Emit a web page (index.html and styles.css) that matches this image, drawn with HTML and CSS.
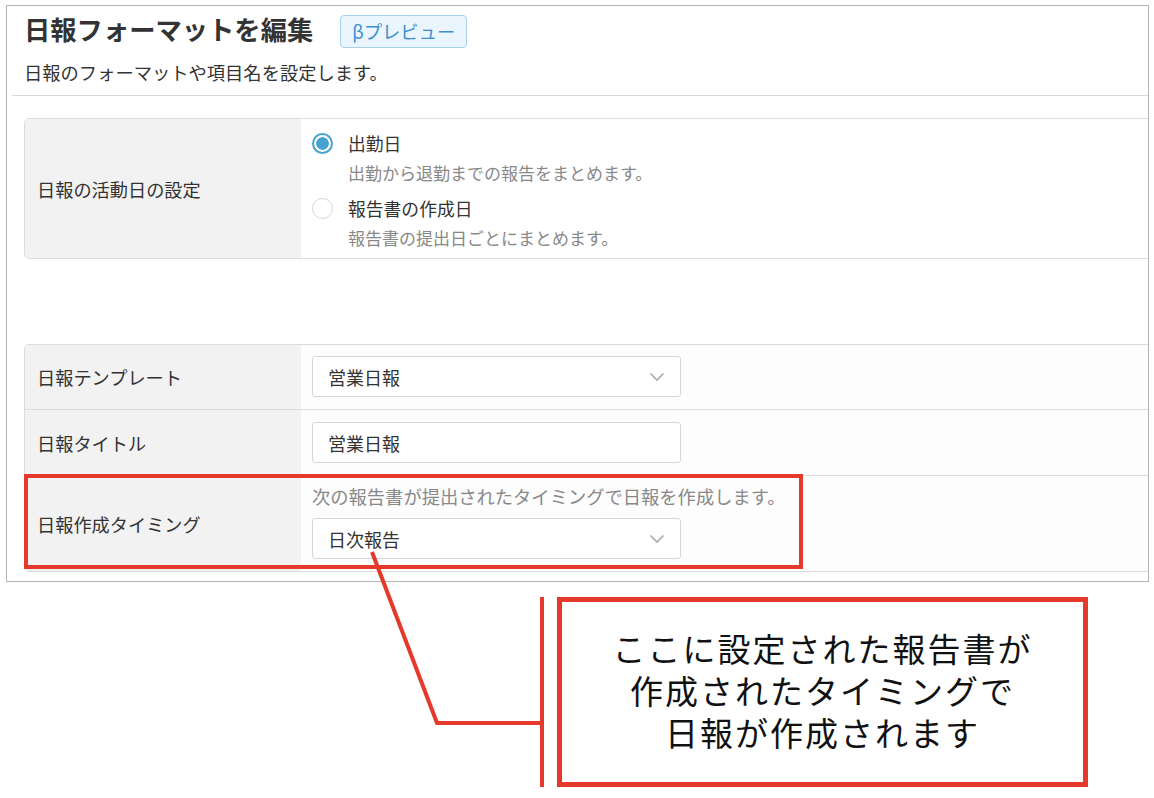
FILE: index.html
```html
<!DOCTYPE html>
<html lang="ja">
<head>
    <meta charset="UTF-8">
    <meta name="viewport" content="width=device-width, initial-scale=1.0">
    <title>日報フォーマットを編集</title>
    <link rel="stylesheet" href="styles.css">
</head>
<body>
    <div class="page">
        <div class="panel">
            <div class="head">
                <div class="title-row">
                    <h1>日報フォーマットを編集</h1>
                    <span class="badge">βプレビュー</span>
                </div>
                <p class="lead">日報のフォーマットや項目名を設定します。</p>
            </div>
            <div class="divider"></div>

            <!-- 活動日 -->
            <div class="form-table first">
                <div class="row">
                    <div class="label">日報の活動日の設定</div>
                    <div class="value options">
                        <label class="option">
                            <span class="radio checked"></span>
                            <span class="option-text">
                                <span class="option-title">出勤日</span>
                                <span class="hint">出勤から退勤までの報告をまとめます。</span>
                            </span>
                        </label>
                        <label class="option">
                            <span class="radio"></span>
                            <span class="option-text">
                                <span class="option-title">報告書の作成日</span>
                                <span class="hint">報告書の提出日ごとにまとめます。</span>
                            </span>
                        </label>
                    </div>
                </div>
            </div>

            <!-- テンプレート -->
            <div class="form-table second">
                <div class="row r1">
                    <div class="label">日報テンプレート</div>
                    <div class="value">
                        <div class="select">営業日報
                            <svg class="chev" width="16" height="10" viewBox="0 0 16 10"><path d="M1.5 1.5 L8 8 L14.5 1.5" fill="none" stroke="#aaa" stroke-width="1.6"/></svg>
                        </div>
                    </div>
                </div>
                <div class="row r2">
                    <div class="label">日報タイトル</div>
                    <div class="value">
                        <div class="select">営業日報</div>
                    </div>
                </div>
                <div class="row r3">
                    <div class="label">日報作成タイミング</div>
                    <div class="value stack">
                        <span class="hint wide">次の報告書が提出されたタイミングで日報を作成します。</span>
                        <div class="select">日次報告
                            <svg class="chev" width="16" height="10" viewBox="0 0 16 10"><path d="M1.5 1.5 L8 8 L14.5 1.5" fill="none" stroke="#aaa" stroke-width="1.6"/></svg>
                        </div>
                    </div>
                </div>
            </div>
        </div>

        <!-- 注釈 -->
        <div class="mark"></div>
        <svg class="lines" width="1154" height="798" viewBox="0 0 1154 798">
            <polyline points="372,552 437,723 541,723" fill="none" stroke="#e5392b" stroke-width="4"/>
            <line x1="542" y1="597" x2="542" y2="787" stroke="#e5392b" stroke-width="4"/>
        </svg>
        <div class="callout">
            <p>ここに設定された報告書が<br>作成されたタイミングで<br>日報が作成されます</p>
        </div>
    </div>
</body>
</html>
```

FILE: styles.css
```css
body {
    margin: 0;
    font-family: "Noto Sans CJK JP", "Noto Sans", sans-serif;
    color: #333;
    background: #fff;
}

.page {
    position: relative;
    width: 1154px;
    height: 798px;
    overflow: hidden;
}

.panel {
    box-sizing: border-box;
    margin: 5px 0 0 6px;
    width: 1143px;
    height: 577px;
    border: 1px solid #b4b4b4;
    overflow: hidden;
    background: #fff;
}

.head {
    padding: 8px 0 0 17px;
}

.title-row {
    display: flex;
    align-items: center;
    gap: 27px;
    height: 34px;
}

h1 {
    margin: 0;
    font-size: 26.3px;
    font-weight: 700;
    color: #333;
    line-height: 34px;
    position: relative;
    top: -2px;
}

.badge {
    box-sizing: border-box;
    height: 33px;
    padding: 0 11px;
    display: flex;
    align-items: center;
    font-size: 18.3px;
    color: #3d8fd1;
    background: #eaf5fd;
    border: 1px solid #a8d1ee;
    border-radius: 4px;
}

.lead {
    margin: 12px 0 0;
    font-size: 18.3px;
    line-height: 24px;
    color: #333;
}

.divider {
    margin: 11px 0 0 5px;
    height: 1px;
    background: #d8d8d8;
}

.form-table {
    margin-left: 17px;
    width: 1160px;
    border: 1px solid #dcdcdc;
    border-radius: 5px;
    overflow: hidden;
}

.form-table.first {
    margin-top: 22px;
}

.form-table.second {
    margin-top: 85px;
}

.row {
    display: flex;
}

.row + .row {
    border-top: 1px solid #dcdcdc;
}

.label {
    width: 276px;
    flex: none;
    box-sizing: border-box;
    padding-left: 12px;
    background: #f2f2f2;
    display: flex;
    align-items: center;
    font-size: 18.2px;
    color: #333;
}

.value {
    flex: 1;
    padding: 12px 0 12px 11px;
    background: #fdfdfd;
}

.r1 .value {
    padding-top: 11px;
}

.r3 .value {
    padding-top: 8px;
}

.stack {
    display: flex;
    flex-direction: column;
    gap: 10px;
}

.options {
    padding: 12px 0 8px 11px;
    display: flex;
    flex-direction: column;
    gap: 11px;
    background: #fff;
}

.option {
    display: flex;
    gap: 15px;
}

.radio {
    box-sizing: border-box;
    width: 21px;
    height: 21px;
    margin-top: 2px;
    border-radius: 50%;
    border: 1px solid #d6d6d6;
    background: #fff;
    flex: none;
}

.radio.checked {
    border: 2px solid #45a3d3;
    background: radial-gradient(circle, #45a3d3 0 6px, #fff 6.5px);
}

.option-text {
    display: flex;
    flex-direction: column;
    gap: 6px;
}

.option-title {
    font-size: 17.8px;
    line-height: 24px;
    color: #333;
}

.hint {
    font-size: 17px;
    line-height: 24px;
    color: #888;
}

.hint.wide {
    font-size: 18.3px;
}

.select {
    box-sizing: border-box;
    width: 369px;
    height: 41px;
    padding: 0 15px;
    display: flex;
    align-items: center;
    justify-content: space-between;
    font-size: 18px;
    color: #333;
    background: #fff;
    border: 1px solid #d6d6d6;
    border-radius: 3px;
}

/* annotations */
.mark {
    position: absolute;
    left: 24px;
    top: 474px;
    width: 779px;
    height: 95px;
    box-sizing: border-box;
    border: 4px solid #e5392b;
}

.lines {
    position: absolute;
    left: 0;
    top: 0;
    pointer-events: none;
}

.callout {
    position: absolute;
    left: 557px;
    top: 597px;
    width: 531px;
    height: 190px;
    box-sizing: border-box;
    border: 5px solid #e5392b;
    background: #fff;
    display: flex;
    align-items: center;
    justify-content: center;
}

.callout p {
    margin: -4px 0 0;
    text-align: center;
    font-size: 33px;
    letter-spacing: 2px;
    line-height: 42px;
    color: #111;
    font-weight: 400;
}
```
